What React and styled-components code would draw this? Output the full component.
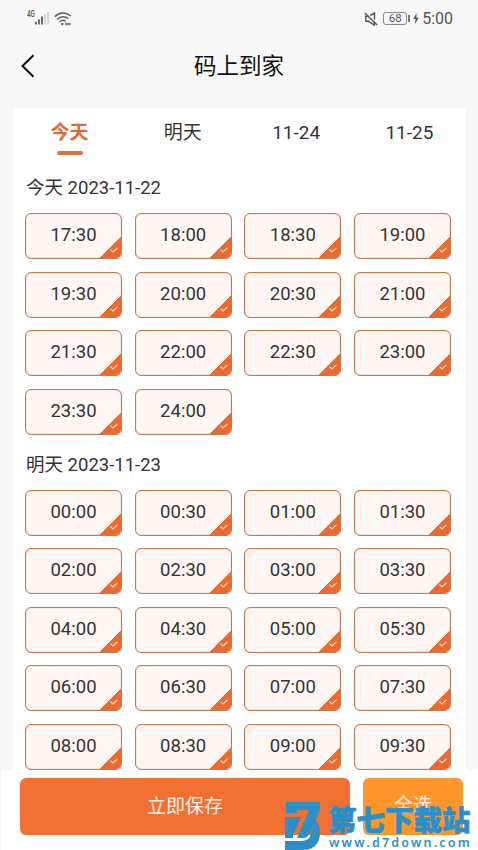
import React, { useState } from 'react';
import styled, { createGlobalStyle } from "styled-components";

const tabs = ["今天", "明天", "11-24", "11-25"];

const days = [
    {
        title: "今天 2023-11-22",
        times: ["17:30", "18:00", "18:30", "19:00", "19:30", "20:00", "20:30", "21:00", "21:30", "22:00", "22:30", "23:00", "23:30", "24:00"],
    },
    {
        title: "明天 2023-11-23",
        times: ["00:00", "00:30", "01:00", "01:30", "02:00", "02:30", "03:00", "03:30", "04:00", "04:30", "05:00", "05:30", "06:00", "06:30", "07:00", "07:30", "08:00", "08:30", "09:00", "09:30"],
    },
];

const allTimes = days.flatMap((day) => day.times.map((time) => day.title + time));

const SignalIcon = () => (
    <svg width="14" height="13" viewBox="0 0 14 13">
        <path d="M1 9.8V12.5M4 7.5V12.5M7 4.5V12.5" stroke="#555" strokeWidth="1.7" />
        <path d="M10 2V12.5M13 0V12.5" stroke="#d2d2d2" strokeWidth="1.7" />
    </svg>
);

const WifiIcon = () => (
    <svg width="18" height="14" viewBox="0 0 18 14" fill="none" stroke="#606060" strokeWidth="1.5">
        <path d="M.8 4.6C5.3.2 12-.1 16.6 4" />
        <path d="M3.3 7.4C6.5 4.2 11 4 14.3 6.8" />
        <path d="M5.6 10C7.6 8 10 8 11.8 9.4" />
        <circle cx="8.3" cy="12" r="1.2" fill="#606060" stroke="none" />
        <ellipse cx="12.4" cy="12" rx="1.2" ry=".9" strokeWidth="1" />
        <ellipse cx="15.3" cy="12" rx="1.2" ry=".9" strokeWidth="1" />
    </svg>
);

const MuteIcon = () => (
    <svg width="14" height="14" viewBox="0 0 14 14" fill="none" stroke="#555" strokeWidth="1.4">
        <path d="M4.5 4.2H1.8V9.3H4.3L10.3 13V9.5M6.3 3.7L10.5 1V7.4" />
        <path d="M.8 1L13.2 13" />
    </svg>
);

const BoltIcon = () => (
    <svg width="6" height="11" viewBox="0 0 6 11">
        <path d="M3.6 0L.3 6H2.5L2.1 11L5.7 4.8H3.4Z" fill="#555" />
    </svg>
);

const BackIcon = () => (
    <svg width="14" height="24" viewBox="0 0 14 24" fill="none" stroke="#111" strokeWidth="2">
        <path d="M12.5 1.2L1.5 12L12.5 22.8" />
    </svg>
);

const CheckIcon = () => (
    <svg width="8" height="6" viewBox="0 0 8 6" fill="none" stroke="#ffe3d2" strokeWidth="1.1">
        <path d="M.5 2.6L2.9 5L7.5 .8" />
    </svg>
);

const SiteLogo = () => (
    <svg width="36" height="48" viewBox="0 0 36 48" fill="#2b8fc9">
        <path d="M1 0H35V8L24.5 31.5Q22.5 36 18 36H12L24 8H12V11H1Z" />
        <path d="M0 15H16L8 33V36H0Z" />
        <path d="M30 18C33.5 21 35 25 35 31C35 42 28 48 18 48H0V39H16C22 39 25.5 36 26 31Z" />
    </svg>
);

const App = () => {
    const [tab, setTab] = useState(0);
    const [selected, setSelected] = useState(allTimes);

    const onToggle = (key) => {
        setSelected(selected.includes(key) ? selected.filter((item) => item !== key) : [...selected, key]);
    };

    return (
        <Screen>
            <GlobalStyle />
            <StatusBar>
                <StatusLeft>
                    <Network>4G</Network>
                    <SignalIcon />
                    <WifiIcon />
                </StatusLeft>
                <StatusRight>
                    <MuteIcon />
                    <Battery>68</Battery>
                    <BatteryTip />
                    <BoltIcon />
                    <Clock>5:00</Clock>
                </StatusRight>
            </StatusBar>
            <Header>
                <BackBtn aria-label="返回"><BackIcon /></BackBtn>
                <Title>码上到家</Title>
            </Header>
            <Card>
                <TabWrap>
                    {tabs.map((name, i) => (
                        <Tab key={name} $active={tab === i} onClick={() => setTab(i)}>{name}</Tab>
                    ))}
                </TabWrap>
                {days.map((day) => (
                    <Day key={day.title}>
                        <DayTitle>{day.title}</DayTitle>
                        <TimeGrid>
                            {day.times.map((time) => {
                                const key = day.title + time;
                                const on = selected.includes(key);
                                return (
                                    <TimeBtn key={key} $on={on} onClick={() => onToggle(key)}>
                                        {time}
                                        {on && <Corner><CheckIcon /></Corner>}
                                    </TimeBtn>
                                );
                            })}
                        </TimeGrid>
                    </Day>
                ))}
            </Card>
            <Footer>
                <SaveBtn>立即保存</SaveBtn>
                <AllBtn onClick={() => setSelected(allTimes)}>全选</AllBtn>
            </Footer>
            <Watermark>
                <SiteLogo />
                <SiteText>
                    <SiteName>第七下载站</SiteName>
                    <SiteUrl>www.d7down.com</SiteUrl>
                </SiteText>
            </Watermark>
        </Screen>
    );
};

export default App;

const GlobalStyle = createGlobalStyle`
    * {
        box-sizing: border-box;
    }
    body {
        margin: 0;
        overflow: hidden;
        background-color: #f7f7f7;
    }
    button {
        padding: 0;
        border: none;
        background: none;
        color: inherit;
        font: inherit;
        cursor: pointer;
    }
    svg {
        display: block;
        flex-shrink: 0;
    }
`
const Screen = styled.div`
    position: relative;
    display: flex;
    flex-direction: column;
    width: 478px;
    height: 850px;
    overflow: hidden;
    background-color: #f7f7f7;
    color: #333;
    font-family: Roboto, "Noto Sans CJK SC", sans-serif;
`
const StatusBar = styled.div`
    display: flex;
    justify-content: space-between;
    height: 36px;
    padding: 0 25px 0 27px;
    color: #555;
`
const StatusLeft = styled.div`
    display: flex;
    align-items: flex-start;
    padding-top: 12px;

    svg:last-child {
        margin-left: 5px;
    }
`
const Network = styled.span`
    width: 8px;
    margin-top: -2px;
    font-size: 8.5px;
    font-weight: 500;
    line-height: 9px;
    transform: scaleX(0.75);
    transform-origin: left;
`
const StatusRight = styled.div`
    display: flex;
    align-items: center;
    padding-top: 1px;
`
const Battery = styled.span`
    width: 24px;
    height: 13px;
    margin-left: 5px;
    border: 1px solid #888;
    border-radius: 3px;
    font-size: 11.5px;
    line-height: 11.5px;
    text-align: center;
`
const BatteryTip = styled.span`
    width: 2px;
    height: 7px;
    margin: 0 3px 0 1px;
    background-color: #777;
`
const Clock = styled.span`
    margin-left: 3px;
    font-size: 16px;
    line-height: 20px;
`
const Header = styled.div`
    display: flex;
    align-items: center;
    height: 60px;
    margin-bottom: 12px;
    padding: 0 21px;
    color: #111;
`
const BackBtn = styled.button`
    width: 24px;
`
const Title = styled.h1`
    flex: 1;
    margin: 0 24px 0 0;
    font-size: 22.5px;
    font-weight: 400;
    line-height: 30px;
    text-align: center;
`
const Card = styled.div`
    height: 662px;
    margin: 0 12px 0 13px;
    overflow: hidden;
    background-color: #fff;
`
const TabWrap = styled.div`
    display: grid;
    grid-template-columns: repeat(4, 1fr);
    height: 61px;
`
const Tab = styled.button`
    display: flex;
    flex-direction: column;
    align-items: center;
    padding-top: 11px;
    color: ${(props) => props.$active ? "#dd6b33" : "#333"};
    font-size: 19px;
    font-weight: ${(props) => props.$active ? 700 : 400};
    line-height: 28px;

    &::after {
        content: "";
        width: 26px;
        height: 4px;
        margin-top: 4px;
        border-radius: 2px;
        background-color: ${(props) => props.$active ? "#d8703f" : "transparent"};
    }
`
const Day = styled.div`
    padding: 5px 15px 0 12px;
    margin-bottom: 11px;
`
const DayTitle = styled.h2`
    margin: 0 0 11px 1px;
    font-size: 18.5px;
    font-weight: 400;
    line-height: 28px;
`
const TimeGrid = styled.div`
    display: grid;
    grid-template-columns: repeat(4, 97px);
    justify-content: space-between;
    row-gap: 12.5px;
`
const TimeBtn = styled.button`
    position: relative;
    height: 46px;
    padding-bottom: 2px;
    overflow: hidden;
    border: 1px solid ${(props) => props.$on ? "#c07a50" : "#ddd"};
    border-radius: 6px;
    background-color: ${(props) => props.$on ? "#fff6f4" : "#fff"};
    box-shadow: inset 0 0 1px ${(props) => props.$on ? "#c07a50" : "#ddd"};
    font-size: 18.5px;
    line-height: 24px;
`
const Corner = styled.span`
    position: absolute;
    right: -1px;
    bottom: -1px;
    display: flex;
    align-items: flex-end;
    justify-content: flex-end;
    width: 24px;
    height: 24px;
    padding: 0 4px 6px 0;
    background: linear-gradient(135deg, transparent 50%, #eb6a30 51%);
`
const Footer = styled.div`
    display: flex;
    gap: 13px;
    height: 80px;
    margin-left: 1px;
    padding: 8px 15px 15px 19px;
    background-color: #fff;
`
const SaveBtn = styled.button`
    flex: 1;
    padding-bottom: 4px;
    border-radius: 6px;
    background-color: #f16f30;
    color: #fff1e8;
    font-size: 19px;
`
const AllBtn = styled(SaveBtn)`
    flex: 0 0 100px;
    padding-bottom: 6px;
    background-color: #ff962b;
`
const Watermark = styled.div`
    position: absolute;
    left: 285px;
    top: 802px;
    display: flex;
    gap: 7px;
    color: #2b8fc9;
    pointer-events: none;
`
const SiteText = styled.div`
    display: flex;
    flex-direction: column;
`
const SiteName = styled.strong`
    font-family: "Noto Sans CJK SC", sans-serif;
    font-size: 28.5px;
    font-weight: 900;
    line-height: 34px;
    -webkit-text-stroke: 0.6px #2b8fc9;
`
const SiteUrl = styled.span`
    padding-left: 1px;
    font-family: "Noto Sans", sans-serif;
    font-size: 12.5px;
    font-weight: 600;
    line-height: 14px;
    letter-spacing: 2.2px;
`
